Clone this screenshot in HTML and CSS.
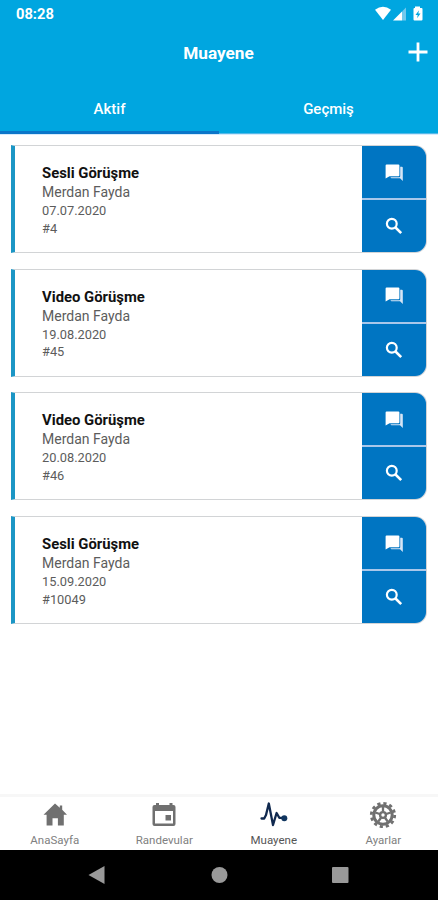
FILE: index.html
```html
<!DOCTYPE html>
<html lang="tr">
<head>
<meta charset="utf-8">
<title>Muayene</title>
<link rel="stylesheet" href="styles.css">
</head>
<body>
<svg class="defs" aria-hidden="true">
  <symbol id="chat" viewBox="0 0 18 17"><path fill="#fff" d="M1.600.5h11.800q1 0 1 1v9.700q0 1-1 1H4.500L.6 14.600V1.500q0-1 1-1z"/><path fill="#d6e5f5" d="M15.200 2.700h1.600q1 0 1 1v13.300L15 14.200H6.600q-1 0-1-1h8.600q1 0 1-1z"/></symbol>
  <symbol id="search" viewBox="0 0 18 18"><circle cx="6.800" cy="6.800" r="4.900" fill="none" stroke="#fff" stroke-width="2.200"/><path d="M10.500 10.500l5.700 5.700" stroke="#fff" stroke-width="2.600"/></symbol>
</svg>
<div class="screen">
  <header class="header">
    <div class="status">
      <span class="clock">08:28</span>
      <svg class="indicators" width="52" height="16" viewBox="0 0 52 16"><path fill="#fff" d="M1 3.700Q9-2 17 3.700L9 14z"/><path fill="#fff" d="M19 14.500L28 5.500v9z"/><path fill="#72c9ed" d="M28 5.500L32 1.500v13h-4z"/><path fill="#fff" d="M41 .5h5v1.500h1.500q1 0 1 1V13.500q0 1-1 1h-7q-1 0-1-1V3q0-1 1-1H41z"/><path fill="#00a6e0" d="M45 4.300L41.500 9h2.200l-.6 3.300L46.500 7.500h-2.200z"/></svg>
    </div>
    <div class="titlebar">
      <h1>Muayene</h1>
      <svg class="add" width="20" height="20" viewBox="0 0 20 20"><path d="M10 .5v19M.5 10h19" stroke="#fff" stroke-width="2.800"/></svg>
    </div>
    <nav class="tabs"><span class="tab active">Aktif</span><span class="tab">Geçmiş</span></nav>
  </header>
  <main class="list">
    <article class="card"><div class="info"><h2>Sesli Görüşme</h2><p class="name">Merdan Fayda</p><p>07.07.2020</p><p class="num">#4</p></div><div class="actions"><span><svg width="18" height="17"><use href="#chat"/></svg></span><span><svg width="18" height="18"><use href="#search"/></svg></span></div></article>
    <article class="card"><div class="info"><h2>Video Görüşme</h2><p class="name">Merdan Fayda</p><p>19.08.2020</p><p class="num">#45</p></div><div class="actions"><span><svg width="18" height="17"><use href="#chat"/></svg></span><span><svg width="18" height="18"><use href="#search"/></svg></span></div></article>
    <article class="card"><div class="info"><h2>Video Görüşme</h2><p class="name">Merdan Fayda</p><p>20.08.2020</p><p class="num">#46</p></div><div class="actions"><span><svg width="18" height="17"><use href="#chat"/></svg></span><span><svg width="18" height="18"><use href="#search"/></svg></span></div></article>
    <article class="card"><div class="info"><h2>Sesli Görüşme</h2><p class="name">Merdan Fayda</p><p>15.09.2020</p><p class="num">#10049</p></div><div class="actions"><span><svg width="18" height="17"><use href="#chat"/></svg></span><span><svg width="18" height="18"><use href="#search"/></svg></span></div></article>
  </main>
  <nav class="bottom">
    <div class="item"><svg width="28" height="28" viewBox="0 0 28 28"><path fill="#707070" d="M14 2.500l4.800 4.200V4.500h2.400v4.300l4.800 5h-3.200V24.500h-5.900v-7.200h-5.400v7.200H5.600V13.800H2.500z"/></svg><span>AnaSayfa</span></div>
    <div class="item"><svg width="28" height="28" viewBox="0 0 28 28"><path fill="#707070" fill-rule="evenodd" d="M6 2h3v2h10.500V2h3v2h1q2 0 2 2v17q0 2-2 2h-19q-2 0-2-2V6q0-2 2-2H6zM5 10v12.500h18V10z"/><path fill="#707070" d="M15.500 14h5.500v5.500h-5.500z"/></svg><span>Randevular</span></div>
    <div class="item current"><svg width="28" height="28" viewBox="0 0 28 28"><path d="M1.500 17.500h2.700L6 14 8.800 2.500l4.200 21.500 3.600-12 2.700 4.800h4" fill="none" stroke="#10294f" stroke-width="2.300" stroke-linejoin="round" stroke-linecap="round"/><circle cx="24.300" cy="17.200" r="3" fill="#10355f"/></svg><span>Muayene</span></div>
    <div class="item"><svg width="28" height="28" viewBox="0 0 28 28"><g fill="none" stroke="#707070"><circle cx="14" cy="14" r="11.700" stroke-width="2.800" stroke-dasharray="3.200 2.926"/><circle cx="14" cy="14" r="9.200" stroke-width="3"/><circle cx="14" cy="14" r="2.900" stroke-width="2.400"/><path stroke-width="2.300" d="M14 10.500V6M17.300 13l4.400-1.500M16 16.800l2.700 3.700M12 16.800l-2.700 3.700M10.700 13l-4.400-1.500"/></g></svg><span>Ayarlar</span></div>
  </nav>
  <footer class="system">
    <svg width="438" height="50" viewBox="0 0 438 50"><g fill="#999"><path d="M88.500 25l16-9v18z"/><circle cx="219.500" cy="25" r="8"/><rect x="332" y="17" width="16.500" height="16" rx="1"/></g></svg>
  </footer>
</div>
</body>
</html>
```
FILE: styles.css
```css
* { box-sizing: border-box; }
body { margin: 0; font-family: Roboto, sans-serif; background: #fff; }
h1, h2, p { margin: 0; }
svg { display: block; }
.defs { display: none; }
.screen { width: 438px; height: 900px; display: flex; flex-direction: column; }
.header { height: 134px; flex: none; background: #00a6e0; color: #fff; }
.status { height: 28px; padding: 0 12px 0 16px; display: flex; align-items: center; justify-content: space-between; }
.clock { font-size: 14.700px; font-weight: 700; }
.indicators { margin-top: -1px; }
.titlebar { height: 50px; padding-right: 10px; display: grid; grid-template-columns: 1fr auto 1fr; align-items: center; }
.titlebar h1 { grid-column: 2; margin-left: 9px; font-size: 17.200px; line-height: 24px; font-weight: 700; }
.add { justify-self: end; margin-top: -2px; }
.tabs { height: 56px; display: flex; }
.tab { flex: 1; padding-top: 21px; font-size: 15px; line-height: 20px; font-weight: 500; text-align: center; border-bottom: 1px solid #55b9e8; }
.tab.active { border-bottom: 3px solid #0b76c9; }
.list { flex: 1; padding: 10px 11px 0; display: flex; flex-direction: column; gap: 15.700px; border-top: 1px solid #d5ebfc; }
.card { height: 108px; display: flex; background: #fff; border: solid #d2d4d6; border-left-color: #1c96c5; border-width: 1px 1px 1px 4px; border-radius: 0 12px 12px 0; overflow: hidden; }
.info { flex: 1; padding: 17px 0 0 27px; }
.info h2 { font-size: 14.850px; line-height: 20px; font-weight: 700; color: #111; }
.info p { font-size: 12.800px; line-height: 17.500px; color: #5c5c5c; }
.info .name { font-size: 14px; line-height: 19px; }
.actions { width: 64px; display: flex; flex-direction: column; gap: 2px; background: #a9c7ea; }
.actions span { flex: 1; background: #0075c2; display: flex; align-items: center; justify-content: center; }
.bottom { height: 56px; flex: none; display: flex; border-top: 3px solid #f7f7f7; }
.item { flex: 1; padding-top: 4px; display: flex; flex-direction: column; align-items: center; color: #808080; font-size: 11.500px; line-height: 14px; }
.item span { margin-top: 4px; }
.item.current { color: #555; }
.system { height: 50px; flex: none; background: #000; }
```
